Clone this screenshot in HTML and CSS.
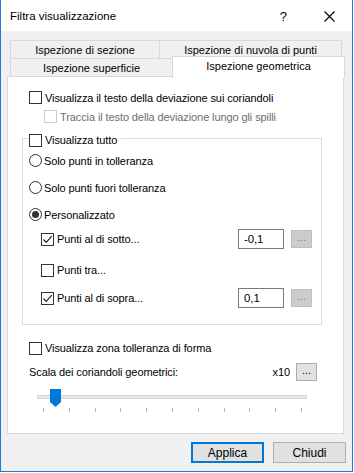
FILE: index.html
```html
<!DOCTYPE html>
<html lang="it">
<head>
  <meta charset="UTF-8">
  <title>Filtra visualizzazione</title>
  <link rel="stylesheet" href="styles.css">
</head>
<body>
  <div class="window">
    <!-- Title bar -->
    <div class="titlebar">
      <span class="title">Filtra visualizzazione</span>
      <span class="help">?</span>
      <svg class="close" width="11" height="11" viewBox="0 0 11 11">
        <path d="M0.5 0.5 L10.5 10.5 M10.5 0.5 L0.5 10.5" stroke="#000" stroke-width="1.1" fill="none"/>
      </svg>
    </div>

    <div class="body">
      <!-- Tabs -->
      <div class="tabs">
        <div class="tab-row back">
          <div class="tab t1">Ispezione di sezione</div>
          <div class="tab t2">Ispezione di nuvola di punti</div>
        </div>
        <div class="tab-row front">
          <div class="tab t3">Ispezione superficie</div>
          <div class="tab selected">Ispezione geometrica</div>
        </div>
      </div>

      <div class="panel">
        <div class="row r1">
          <span class="check"></span>
          <span>Visualizza il testo della deviazione sui coriandoli</span>
        </div>
        <div class="row r2 disabled">
          <span class="check"></span>
          <span>Traccia il testo della deviazione lungo gli spilli</span>
        </div>

        <div class="group">
          <div class="legend">
            <span class="check"></span>
            <span>Visualizza tutto</span>
          </div>
          <div class="radio-row">
            <span class="radio"></span>
            <span>Solo punti in tolleranza</span>
          </div>
          <div class="radio-row">
            <span class="radio"></span>
            <span>Solo punti fuori tolleranza</span>
          </div>
          <div class="radio-row">
            <span class="radio on"></span>
            <span>Personalizzato</span>
          </div>

          <div class="sub sub1">
            <span class="check on"><svg width="11" height="11" viewBox="0 0 11 11"><path d="M1.5 5.5 L4.2 8.3 L9.8 2.2" stroke="#222" stroke-width="1.2" fill="none"/></svg></span>
            <span class="grow">Punti al di sotto...</span>
            <span class="field">-0,1</span>
            <span class="dots off">...</span>
          </div>
          <div class="sub sub2">
            <span class="check"></span>
            <span class="grow">Punti tra...</span>
          </div>
          <div class="sub sub3">
            <span class="check on"><svg width="11" height="11" viewBox="0 0 11 11"><path d="M1.5 5.5 L4.2 8.3 L9.8 2.2" stroke="#222" stroke-width="1.2" fill="none"/></svg></span>
            <span class="grow">Punti al di sopra...</span>
            <span class="field">0,1</span>
            <span class="dots off">...</span>
          </div>
        </div>

        <div class="row r3">
          <span class="check"></span>
          <span>Visualizza zona tolleranza di forma</span>
        </div>
        <div class="scale-row">
          <span class="grow">Scala dei coriandoli geometrici:</span>
          <span class="factor">x10</span>
          <span class="dots">...</span>
        </div>

        <div class="slider">
          <div class="track">
            <svg class="thumb" width="11" height="18" viewBox="0 0 11 18">
              <path d="M0 0 H11 V13 L5.5 18 L0 13 Z" fill="#0078d7"/>
            </svg>
          </div>
          <div class="ticks">
            <i></i><i></i><i></i><i></i><i></i><i></i><i></i><i></i><i></i><i></i><i></i>
          </div>
        </div>
      </div>

      <div class="buttons">
        <button class="btn default">Applica</button>
        <button class="btn">Chiudi</button>
      </div>
    </div>
  </div>
</body>
</html>
```

FILE: styles.css
```css
* {
  margin: 0;
  padding: 0;
  box-sizing: border-box;
}

body {
  font-family: "Liberation Sans", Arial, sans-serif;
  font-size: 11px;
  letter-spacing: -0.1px;
  color: #000;
  background-color: #fff;
  width: 354px;
  height: 473px;
  overflow: hidden;
}

.window {
  width: 353px;
  height: 472px;
  border: 1px solid #1a7cd5;
  border-top: none;
  background-color: #f0f0f0;
  display: flex;
  flex-direction: column;
}

/* title bar */
.titlebar {
  height: 31px;
  background-color: #fff;
  display: flex;
  align-items: center;
  padding-left: 9px;
}

.title {
  font-size: 11.5px;
  letter-spacing: 0;
  flex-grow: 1;
  margin-top: 1px;
}

.help {
  font-size: 13px;
  margin-right: 37px;
  margin-top: 1px;
}

.close {
  margin-right: 17px;
  margin-top: 1px;
}

.body {
  flex-grow: 1;
  padding: 9px 0 0 6px;
  display: flex;
  flex-direction: column;
}

/* tabs */
.tabs {
  padding-left: 3px;
  display: flex;
  flex-direction: column;
}

.tab-row {
  display: flex;
  height: 18px;
}

.tab {
  border: 1px solid #d9d9d9;
  background-color: #f0f0f0;
  display: flex;
  justify-content: center;
  align-items: center;
  height: 19px;
  letter-spacing: 0;
}

.back .tab {
  border-bottom: none;
}

.t1 {
  width: 150px;
}

.t2 {
  width: 183px;
  margin-left: -1px;
}

.front {
  height: 18px;
}

.t3 {
  width: 163px;
  border-bottom: none;
}

.tab.selected {
  width: 173px;
  height: 22px;
  margin-top: -2px;
  margin-left: -1px;
  background-color: #fff;
  border-bottom: none;
  position: relative;
  z-index: 2;
  align-items: flex-start;
  padding-top: 3px;
}

.panel {
  width: 337px;
  height: 358px;
  background-color: #fff;
  border: 1px solid #d9d9d9;
  padding: 11px 0 0 21px;
  display: flex;
  flex-direction: column;
}

/* generic controls */
.row {
  display: flex;
  align-items: center;
  height: 19px;
}

.check {
  width: 13px;
  height: 13px;
  border: 1px solid #333;
  background-color: #fff;
  margin-right: 3px;
  display: flex;
  align-items: center;
  justify-content: center;
  flex-shrink: 0;
}

.radio {
  width: 13px;
  height: 13px;
  border: 1px solid #333;
  border-radius: 50%;
  margin-right: 2px;
  display: flex;
  align-items: center;
  justify-content: center;
  flex-shrink: 0;
}

.radio.on::after {
  content: "";
  width: 7px;
  height: 7px;
  border-radius: 50%;
  background-color: #333;
}

.r2 {
  margin-left: 15px;
}

.disabled {
  color: #6d6d6d;
}

.disabled .check {
  border-color: #ccc;
}

/* group box */
.group {
  width: 300px;
  margin-left: -7px;
  margin-top: 12px;
  border: 1px solid #dcdcdc;
  padding: 0 9px 16px 6px;
  display: flex;
  flex-direction: column;
}

.legend {
  display: flex;
  align-items: center;
  height: 14px;
  margin-top: -6px;
  align-self: flex-start;
  background-color: #fff;
  padding-right: 4px;
}

.radio-row {
  display: flex;
  align-items: center;
  height: 27px;
}

.sub {
  display: flex;
  align-items: center;
  height: 20px;
  padding-left: 12px;
}

.sub1 {
  margin-top: 1px;
}

.sub2 {
  margin-top: 11px;
}

.sub3 {
  margin-top: 8px;
}

.grow {
  flex-grow: 1;
}

.field {
  width: 46px;
  height: 20px;
  border: 1px solid #7a7a7a;
  padding-left: 5px;
  display: flex;
  align-items: center;
  margin-right: 7px;
  font-size: 11.5px;
}

.dots {
  width: 21px;
  height: 18px;
  border: 1px solid #adadad;
  background-color: #e1e1e1;
  display: flex;
  justify-content: center;
  align-items: flex-start;
  line-height: 12px;
  font-size: 11px;
}

.dots.off {
  background-color: #ccc;
  border-color: #bfbfbf;
  color: #838383;
}

.r3 {
  margin-top: 14px;
  height: 18px;
}

.scale-row {
  display: flex;
  align-items: center;
  height: 18px;
  margin-top: 6px;
  width: 288px;
}

.factor {
  margin-right: 6px;
}

/* slider */
.slider {
  margin-top: 8px;
  margin-left: 8px;
  width: 270px;
  display: flex;
  flex-direction: column;
}

.track {
  height: 4px;
  margin-top: 6px;
  background-color: #e7eaea;
  border: 1px solid #d6d6d6;
  display: flex;
}

.thumb {
  margin-top: -7px;
  margin-left: 12px;
}

.ticks {
  margin-top: 9px;
  margin-left: 6px;
  width: 259px;
  display: flex;
  justify-content: space-between;
}

.ticks i {
  width: 1px;
  height: 4px;
  background-color: #b4b4b4;
}

/* bottom buttons */
.buttons {
  display: flex;
  justify-content: flex-end;
  gap: 9px;
  padding: 8px 6px 0 0;
}

.btn {
  width: 73px;
  height: 21px;
  font-family: "Liberation Sans", Arial, sans-serif;
  font-size: 12px;
  color: #000;
  background-color: #e1e1e1;
  border: 1px solid #adadad;
}

.btn.default {
  border: 2px solid #0078d7;
}
```
